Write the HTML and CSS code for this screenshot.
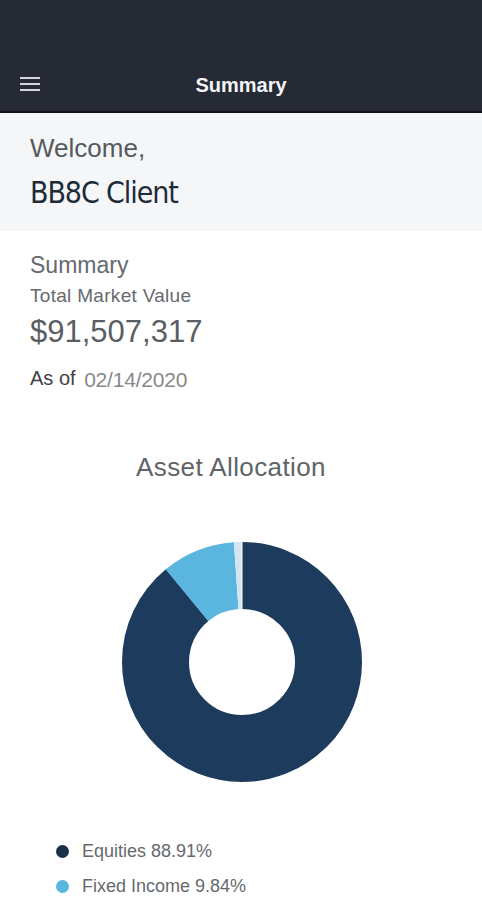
FILE: index.html
```html
<!DOCTYPE html>
<html>
<head>
<meta charset="utf-8">
<link rel="stylesheet" href="styles.css">
</head>
<body>
<header class="topbar">
  <div class="toolbar">
    <svg class="menu" width="20" height="16" viewBox="0 0 20 16">
      <path d="M0 2H20M0 8H20M0 14H20" stroke="#d4d6da" stroke-width="2"/>
    </svg>
    <div class="title">Summary</div>
  </div>
</header>
<section class="welcome">
  <div class="hello">Welcome,</div>
  <div class="client">BB8C Client</div>
</section>
<section class="summary">
  <div class="sum-title">Summary</div>
  <div class="label">Total Market Value</div>
  <div class="value">$91,507,317</div>
  <div class="asof"><span class="asof-l">As of</span> <span class="date">02/14/2020</span></div>
</section>
<section class="allocation">
  <div class="alloc-title">Asset Allocation</div>
  <div class="chart">
    <svg width="240" height="240" viewBox="0 0 240 240">
      <g transform="rotate(-90 120 120)" fill="none" stroke-width="67">
        <circle cx="120" cy="120" r="86.5" stroke="#1c3b5d" stroke-dasharray="483.2 543.5" stroke-dashoffset="0"/>
        <circle cx="120" cy="120" r="86.5" stroke="#5ab6df" stroke-dasharray="53.5 543.5" stroke-dashoffset="-483.2"/>
        <circle cx="120" cy="120" r="86.5" stroke="#d3e6f0" stroke-dasharray="6.8 543.5" stroke-dashoffset="-536.7"/>
      </g>
      <line x1="120" y1="0" x2="120" y2="67" stroke="#ffffff" stroke-width="1"/>
    </svg>
  </div>
  <ul class="legend">
    <li><span class="dot eq"></span><span class="ltxt">Equities 88.91%</span></li>
    <li><span class="dot fi"></span><span class="ltxt">Fixed Income 9.84%</span></li>
  </ul>
</section>
</body>
</html>
```
FILE: styles.css
```css
* { box-sizing: border-box; }
html, body { margin: 0; padding: 0; }
body {
  width: 482px;
  height: 900px;
  overflow: hidden;
  background: #ffffff;
  font-family: "Liberation Sans", Arial, sans-serif;
}
.topbar {
  height: 113px;
  background: #252a35;
  border-bottom: 2px solid #10131a;
  display: flex;
  flex-direction: column;
  justify-content: flex-end;
}
.toolbar {
  height: 53px;
  display: flex;
  align-items: center;
  padding-left: 20px;
  position: relative;
}
.menu { display: block; margin-top: -2px; }
.title {
  position: absolute;
  left: 0;
  right: 0;
  top: 16px;
  text-align: center;
  color: #f4f5f7;
  font-size: 20px;
  font-weight: bold;
}
.welcome {
  background: #f5f6f7;
  height: 118px;
  padding: 20px 30px 0;
}
.hello {
  font-size: 26px;
  line-height: 30px;
  color: #555a5f;
}
.client {
  font-family: "DejaVu Sans Condensed", "Liberation Sans Narrow", sans-serif;
  font-size: 30px;
  line-height: 36px;
  margin-top: 12px;
  color: #1e2b39;
  letter-spacing: -1.1px;
}
.summary {
  padding: 20px 30px 0;
  color: #666a6e;
}
.sum-title {
  font-size: 23px;
  line-height: 28px;
}
.label {
  font-size: 19px;
  line-height: 22px;
  margin-top: 6px;
  letter-spacing: 0.3px;
}
.value {
  font-size: 31px;
  line-height: 36px;
  margin-top: 7px;
  color: #5a5e62;
}
.asof {
  margin-top: 16px;
  font-size: 20px;
  line-height: 24px;
}
.asof-l { color: #3f4246; }
.date { color: #86898c; margin-left: 3px; position: relative; top: 2px; font-size: 21px; letter-spacing: -0.2px; }
.allocation {
  padding-top: 62px;
}
.alloc-title {
  text-align: center;
  font-size: 26px;
  line-height: 30px;
  color: #606468;
  padding-right: 20px;
  letter-spacing: 0.4px;
}
.chart {
  display: flex;
  justify-content: center;
  margin-top: 60px;
  padding-left: 2px;
}
.chart svg { display: block; }
.legend {
  list-style: none;
  margin: 52px 0 0;
  padding: 0 0 0 56px;
}
.legend li {
  display: flex;
  align-items: center;
  height: 35px;
}
.dot {
  width: 13px;
  height: 13px;
  border-radius: 50%;
  margin-right: 13px;
}
.dot.eq { background: #1a2f48; }
.dot.fi { background: #5ab6df; }
.ltxt {
  font-size: 18px;
  color: #66696c;
}
```
